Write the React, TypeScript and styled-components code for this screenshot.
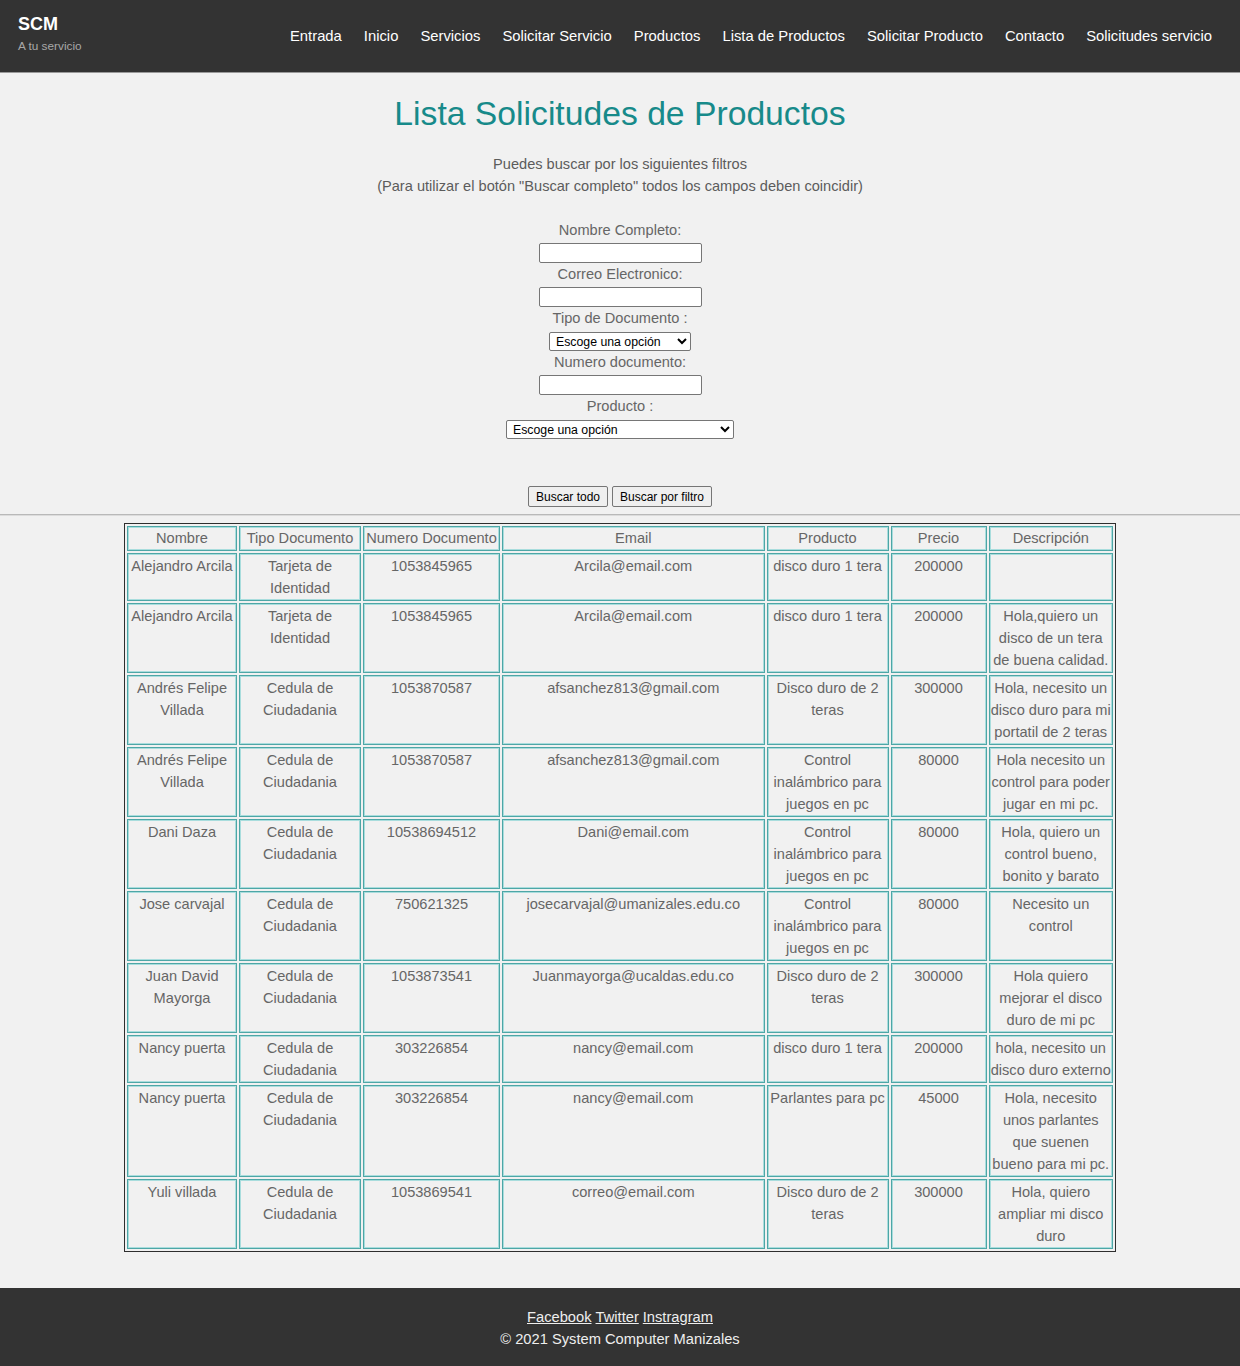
import React from "react";
import styled, { createGlobalStyle } from "styled-components";

const Global = createGlobalStyle`
  html, body { margin: 0; padding: 0; background: #f1f1f1; }
  body { font-family: "Liberation Sans", Arial, sans-serif; color: #666; }
  * { box-sizing: border-box; }
`;

const Header = styled.header`
  height: 73px;
  background: #333;
  border-bottom: 1px solid #9a9a9a;
  display: flex;
  align-items: center;
  justify-content: space-between;
  padding: 0 28px 0 18px;
`;

const Brand = styled.div`
  display: flex;
  flex-direction: column;
  padding-bottom: 3px;
`;

const BrandName = styled.span`
  color: #fff;
  font-weight: bold;
  font-size: 18px;
  line-height: 22px;
`;

const BrandSub = styled.span`
  color: #a8a8a8;
  font-size: 11.8px;
  line-height: 22px;
`;

const Nav = styled.nav`
  display: flex;
  gap: 22px;
`;

const NavLink = styled.a`
  color: #fff;
  font-size: 14.8px;
  text-decoration: none;
  line-height: 20px;
`;

const Main = styled.main`
  display: flex;
  flex-direction: column;
  align-items: center;
  padding: 20px 0 36px;
`;

const Title = styled.h1`
  margin: 0;
  font-weight: normal;
  font-size: 33.7px;
  line-height: 40px;
  color: #178a8a;
`;

const Intro = styled.p`
  margin: 20px 0 22px;
  font-size: 14.6px;
  line-height: 22px;
  color: #5c5c5c;
  text-align: center;
`;

const Form = styled.form`
  display: flex;
  flex-direction: column;
  align-items: center;
  width: 100%;
`;

const Label = styled.label`
  font-size: 14.6px;
  line-height: 22px;
  color: #666;
`;

const TextInput = styled.input`
  width: 163px;
  height: 20px;
  margin-top: 2px;
  border: 1px solid #767676;
  border-radius: 2px;
  background: #fff;
  padding: 0 2px;
`;

const Select = styled.select<{ $w: number }>`
  width: ${(p) => p.$w}px;
  height: 19px;
  margin-top: 3px;
  font-family: "Liberation Sans", Arial, sans-serif;
  font-size: 12.3px;
  color: #000;
  border: 1px solid #767676;
  border-radius: 2px;
  background: #fff;
  padding: 0 0 0 2px;
`;

const Buttons = styled.div`
  display: flex;
  gap: 4px;
  margin-top: 47px;
`;

const Button = styled.button`
  height: 21px;
  padding: 0 7px;
  font-family: "Liberation Sans", Arial, sans-serif;
  font-size: 12px;
  color: #000;
  background: #efefef;
  border: 1px solid #767676;
  border-radius: 2px;
`;

const Rule = styled.hr`
  align-self: stretch;
  margin: 7px 0 7px;
  border: 0;
  border-top: 1px solid #b9b9b9;
  border-bottom: 1px solid #dcdcdc;
`;

const Table = styled.table`
  width: 992px;
  table-layout: fixed;
  border: 1px solid #2e2e2e;
  border-spacing: 2px;
  font-size: 14.6px;
  line-height: 22px;
  color: #666;
`;

const Cell = styled.td<{ $w?: number }>`
  ${(p) => (p.$w ? `width: ${p.$w}px;` : "")}
  border: 1px solid #4ea6a6;
  box-shadow: inset 0 0 0 1px #a9dddd;
  padding: 1px;
  text-align: center;
  vertical-align: top;
  font-weight: normal;
`;

const HeadCell = styled(Cell).attrs({ as: "th" })`
  padding: 0 1px 1px;
`;

const Footer = styled.footer`
  background: #333;
  padding: 18px 0 19px;
  text-align: center;
  color: #eee;
  font-size: 14.7px;
  line-height: 22px;
`;

const FootLinks = styled.div`
  display: flex;
  justify-content: center;
  gap: 4px;
`;

const FootLink = styled.a`
  color: #eee;
  text-decoration: underline;
`;

const navItems = [
  "Entrada",
  "Inicio",
  "Servicios",
  "Solicitar Servicio",
  "Productos",
  "Lista de Productos",
  "Solicitar Producto",
  "Contacto",
  "Solicitudes servicio",
];

const columns: [string, number][] = [
  ["Nombre", 110],
  ["Tipo Documento", 122],
  ["Numero Documento", 137],
  ["Email", 262.5],
  ["Producto", 122],
  ["Precio", 96],
  ["Descripción", 124.5],
];

const rows: string[][] = [
  ["Alejandro Arcila", "Tarjeta de Identidad", "1053845965", "Arcila@email.com", "disco duro 1 tera", "200000", ""],
  ["Alejandro Arcila", "Tarjeta de Identidad", "1053845965", "Arcila@email.com", "disco duro 1 tera", "200000", "Hola,quiero un disco de un tera de buena calidad."],
  ["Andrés Felipe Villada", "Cedula de Ciudadania", "1053870587", "afsanchez813@gmail.com", "Disco duro de 2 teras", "300000", "Hola, necesito un disco duro para mi portatil de 2 teras"],
  ["Andrés Felipe Villada", "Cedula de Ciudadania", "1053870587", "afsanchez813@gmail.com", "Control inalámbrico para juegos en pc", "80000", "Hola necesito un control para poder jugar en mi pc."],
  ["Dani Daza", "Cedula de Ciudadania", "10538694512", "Dani@email.com", "Control inalámbrico para juegos en pc", "80000", "Hola, quiero un control bueno, bonito y barato"],
  ["Jose carvajal", "Cedula de Ciudadania", "750621325", "josecarvajal@umanizales.edu.co", "Control inalámbrico para juegos en pc", "80000", "Necesito un control"],
  ["Juan David Mayorga", "Cedula de Ciudadania", "1053873541", "Juanmayorga@ucaldas.edu.co", "Disco duro de 2 teras", "300000", "Hola quiero mejorar el disco duro de mi pc"],
  ["Nancy puerta", "Cedula de Ciudadania", "303226854", "nancy@email.com", "disco duro 1 tera", "200000", "hola, necesito un disco duro externo"],
  ["Nancy puerta", "Cedula de Ciudadania", "303226854", "nancy@email.com", "Parlantes para pc", "45000", "Hola, necesito unos parlantes que suenen bueno para mi pc."],
  ["Yuli villada", "Cedula de Ciudadania", "1053869541", "correo@email.com", "Disco duro de 2 teras", "300000", "Hola, quiero ampliar mi disco duro"],
];

export default function App() {
  return (
    <>
      <Global />
      <Header>
        <Brand>
          <BrandName>SCM</BrandName>
          <BrandSub>A tu servicio</BrandSub>
        </Brand>
        <Nav>
          {navItems.map((n) => (
            <NavLink key={n} href="#">
              {n}
            </NavLink>
          ))}
        </Nav>
      </Header>
      <Main>
        <Title>Lista Solicitudes de Productos</Title>
        <Intro>
          Puedes buscar por los siguientes filtros
          <br />
          (Para utilizar el botón "Buscar completo" todos los campos deben coincidir)
        </Intro>
        <Form onSubmit={(e) => e.preventDefault()}>
          <Label>Nombre Completo:</Label>
          <TextInput type="text" />
          <Label>Correo Electronico:</Label>
          <TextInput type="text" />
          <Label>Tipo de Documento :</Label>
          <Select $w={142} defaultValue="">
            <option value="">Escoge una opción</option>
          </Select>
          <Label>Numero documento:</Label>
          <TextInput type="text" />
          <Label>Producto :</Label>
          <Select $w={228} defaultValue="">
            <option value="">Escoge una opción</option>
          </Select>
          <Buttons>
            <Button type="button">Buscar todo</Button>
            <Button type="button">Buscar por filtro</Button>
          </Buttons>
          <Rule />
        </Form>
        <Table>
          <thead>
            <tr>
              {columns.map(([c, w]) => (
                <HeadCell key={c} $w={w}>
                  {c}
                </HeadCell>
              ))}
            </tr>
          </thead>
          <tbody>
            {rows.map((r, i) => (
              <tr key={i}>
                {r.map((v, j) => (
                  <Cell key={j}>{v}</Cell>
                ))}
              </tr>
            ))}
          </tbody>
        </Table>
      </Main>
      <Footer>
        <FootLinks>
          <FootLink href="#">Facebook</FootLink>
          <FootLink href="#">Twitter</FootLink>
          <FootLink href="#">Instragram</FootLink>
        </FootLinks>
        <div>© 2021 System Computer Manizales</div>
      </Footer>
    </>
  );
}
